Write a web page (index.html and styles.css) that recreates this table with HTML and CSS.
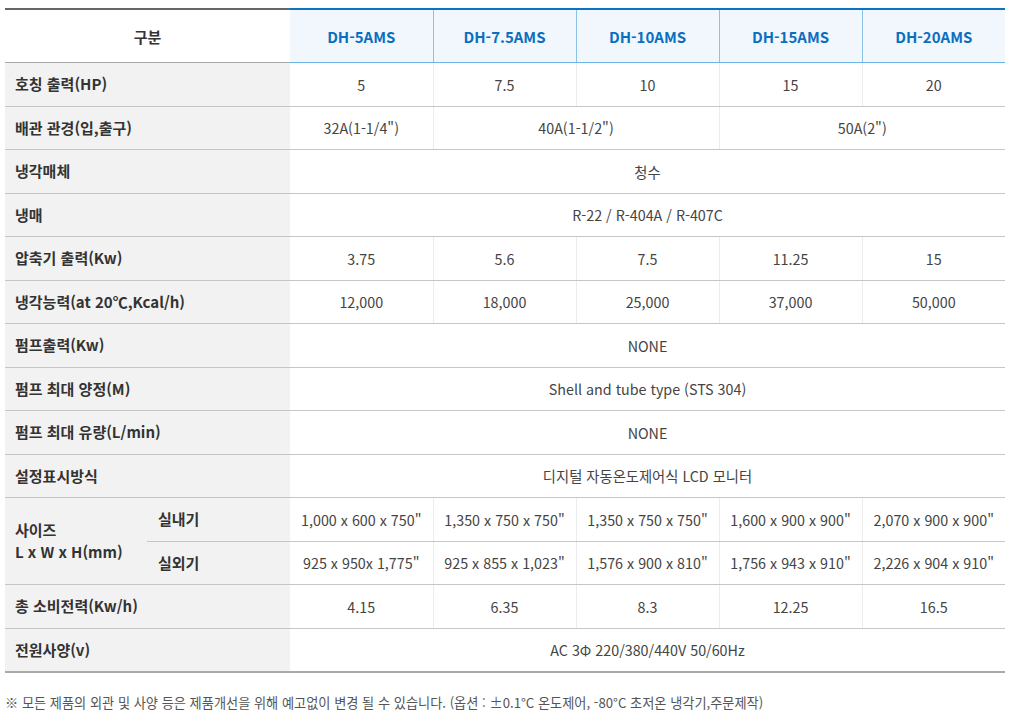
FILE: index.html
```html
<!DOCTYPE html>
<html lang="ko">
<head>
<meta charset="utf-8">
<title>사양표</title>
<link rel="stylesheet" href="styles.css">
</head>
<body>
<div class="wrap">
<table class="spec">
  <colgroup>
    <col class="c-a"><col class="c-b">
    <col class="c-m"><col class="c-m"><col class="c-m"><col class="c-m"><col class="c-m">
  </colgroup>
  <thead>
    <tr>
      <th colspan="2" class="h-label">구분</th>
      <th class="h-model">DH-5AMS</th>
      <th class="h-model">DH-7.5AMS</th>
      <th class="h-model">DH-10AMS</th>
      <th class="h-model">DH-15AMS</th>
      <th class="h-model">DH-20AMS</th>
    </tr>
  </thead>
  <tbody>
    <tr><th colspan="2">호칭 출력(HP)</th><td>5</td><td>7.5</td><td>10</td><td>15</td><td>20</td></tr>
    <tr><th colspan="2">배관 관경(입,출구)</th><td>32A(1-1/4")</td><td colspan="2">40A(1-1/2")</td><td colspan="2">50A(2")</td></tr>
    <tr><th colspan="2">냉각매체</th><td colspan="5">청수</td></tr>
    <tr><th colspan="2">냉매</th><td colspan="5">R-22 / R-404A / R-407C</td></tr>
    <tr><th colspan="2">압축기 출력(Kw)</th><td>3.75</td><td>5.6</td><td>7.5</td><td>11.25</td><td>15</td></tr>
    <tr><th colspan="2">냉각능력(at 20℃,Kcal/h)</th><td>12,000</td><td>18,000</td><td>25,000</td><td>37,000</td><td>50,000</td></tr>
    <tr><th colspan="2">펌프출력(Kw)</th><td colspan="5">NONE</td></tr>
    <tr><th colspan="2">펌프 최대 양정(M)</th><td colspan="5">Shell and tube type (STS 304)</td></tr>
    <tr><th colspan="2">펌프 최대 유량(L/min)</th><td colspan="5">NONE</td></tr>
    <tr><th colspan="2">설정표시방식</th><td colspan="5">디지털 자동온도제어식 LCD 모니터</td></tr>
    <tr><th rowspan="2">사이즈<br>L x W x H(mm)</th><th class="sub">실내기</th><td>1,000 x 600 x 750"</td><td>1,350 x 750 x 750"</td><td>1,350 x 750 x 750"</td><td>1,600 x 900 x 900"</td><td>2,070 x 900 x 900"</td></tr>
    <tr><th class="sub">실외기</th><td>925 x 950x 1,775"</td><td>925 x 855 x 1,023"</td><td>1,576 x 900 x 810"</td><td>1,756 x 943 x 910"</td><td>2,226 x 904 x 910"</td></tr>
    <tr><th colspan="2">총 소비전력(Kw/h)</th><td>4.15</td><td>6.35</td><td>8.3</td><td>12.25</td><td>16.5</td></tr>
    <tr class="last"><th colspan="2">전원사양(v)</th><td colspan="5">AC 3Φ 220/380/440V 50/60Hz</td></tr>
  </tbody>
</table>
<p class="note">※ 모든 제품의 외관 및 사양 등은 제품개선을 위해 예고없이 변경 될 수 있습니다. (옵션 : ±0.1°C 온도제어, -80°C 초저온 냉각기,주문제작)</p>
</div>
</body>
</html>
```
FILE: styles.css
```css
html, body {
  margin: 0;
  padding: 0;
  background: #fff;
}
body {
  font-family: "Noto Sans CJK KR", "Noto Sans", sans-serif;
  color: #333;
}
.wrap {
  padding: 8px 8px 0 5px;
}
.spec {
  width: 1000px;
  border-collapse: collapse;
  table-layout: fixed;
  font-size: 14.3px;
}
.c-a { width: 142px; }
.c-b { width: 143px; }
.c-m { width: 143px; }

.spec thead th {
  height: 52px;
  padding: 0;
  font-size: 15px;
  font-weight: 700;
  text-align: center;
  vertical-align: middle;
}
.h-label {
  border-top: 2px solid #666;
  border-bottom: 1px solid #aaa;
  color: #333;
  background: #fff;
}
.h-model {
  border-top: 2px solid #0a73c2;
  border-bottom: 1px solid #6cb4e6;
  border-left: 1px solid #8cc2ea;
  background: #f1f7fc;
  color: #0b6fc0;
}
.spec thead th:nth-child(2) { border-left: none; }

.spec tbody th,
.spec tbody td {
  height: 43.5px;
  padding: 0;
  border-bottom: 1px solid #c6c6c6;
  vertical-align: middle;
  box-sizing: border-box;
}
.spec tbody th {
  background: #f2f2f2;
  text-align: left;
  padding-left: 10px;
  font-size: 15px;
  font-weight: 700;
  color: #333;
  line-height: 22px;
}
.spec tbody th.sub {
  padding-left: 11px;
}
.spec tbody td {
  text-align: center;
  font-weight: 400;
  color: #444;
  border-left: 1px solid #ececec;
}
.spec tbody th + td { border-left: none; }
.spec tbody tr.last th,
.spec tbody tr.last td {
  border-bottom: 2px solid #aaa;
}
.note {
  margin: 20px 0 0 0;
  font-size: 13.2px;
  color: #555;
}
```
